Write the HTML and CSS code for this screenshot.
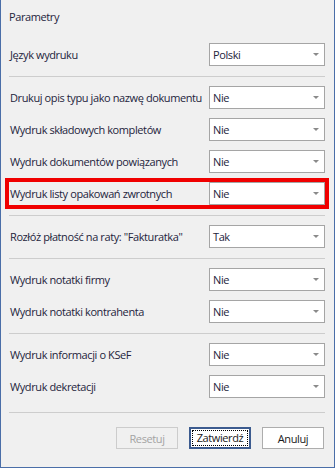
FILE: index.html
```html
<!DOCTYPE html>
<html lang="pl">
<head>
    <meta charset="UTF-8">
    <title>Parametry</title>
    <link rel="stylesheet" href="styles.css">
</head>
<body>
    <div class="window">
        <div class="title">Parametry</div>

        <div class="group">
            <div class="row">
                <span class="label">Język wydruku</span>
                <div class="select">Polski<span class="arrow"></span></div>
            </div>
        </div>

        <div class="group">
            <div class="row">
                <span class="label">Drukuj opis typu jako nazwę dokumentu</span>
                <div class="select">Nie<span class="arrow"></span></div>
            </div>
            <div class="row">
                <span class="label">Wydruk składowych kompletów</span>
                <div class="select">Nie<span class="arrow"></span></div>
            </div>
            <div class="row">
                <span class="label">Wydruk dokumentów powiązanych</span>
                <div class="select">Nie<span class="arrow"></span></div>
            </div>
            <div class="row marked">
                <span class="label">Wydruk listy opakowań zwrotnych</span>
                <div class="select">Nie<span class="arrow"></span></div>
            </div>
        </div>

        <div class="group">
            <div class="row">
                <span class="label">Rozłóż płatność na raty: "Fakturatka"</span>
                <div class="select">Tak<span class="arrow"></span></div>
            </div>
        </div>

        <div class="group">
            <div class="row">
                <span class="label">Wydruk notatki firmy</span>
                <div class="select">Nie<span class="arrow"></span></div>
            </div>
            <div class="row">
                <span class="label">Wydruk notatki kontrahenta</span>
                <div class="select">Nie<span class="arrow"></span></div>
            </div>
        </div>

        <div class="group last">
            <div class="row">
                <span class="label">Wydruk informacji o KSeF</span>
                <div class="select">Nie<span class="arrow"></span></div>
            </div>
            <div class="row">
                <span class="label">Wydruk dekretacji</span>
                <div class="select">Nie<span class="arrow"></span></div>
            </div>
        </div>

        <div class="buttons">
            <button class="btn disabled">Resetuj</button>
            <button class="btn default"><span class="focus">Zatwierdź</span></button>
            <button class="btn">Anuluj</button>
        </div>
    </div>
</body>
</html>
```

FILE: styles.css
```css
body {
    margin: 0;
    padding: 0;
    background-color: #f0f0f0;
    font-family: 'Open Sans', sans-serif;
    font-size: 11px;
    letter-spacing: -0.4px;
    color: #24243c;
}
.window {
    width: 335px;
    height: 468px;
    box-sizing: border-box;
    border: 1px solid #4a6ea8;
    border-top: none;
    background-color: #f0f0f0;
    padding: 0 9px 0 8px;
}
.title {
    height: 43px;
    box-sizing: border-box;
    padding: 9px 0 0 0;
    line-height: 15px;
}
.group {
    display: flex;
    flex-direction: column;
    gap: 9px;
    padding-bottom: 10px;
    margin-bottom: 9px;
    border-bottom: 1px solid #cdcdcd;
}
.group.last {
    padding-bottom: 14px;
    margin-bottom: 14px;
}
.row {
    display: flex;
    align-items: center;
    height: 23px;
}
.row.marked {
    outline: 4px solid #f00000;
}
.label {
    flex: 1;
    padding-left: 1px;
    white-space: nowrap;
}
.select {
    width: 116px;
    height: 23px;
    box-sizing: border-box;
    border: 1px solid #a5a5a5;
    background-color: #fff;
    padding: 0 0 0 3px;
    line-height: 21px;
    display: flex;
    align-items: center;
    justify-content: space-between;
}
.arrow {
    width: 0;
    height: 0;
    margin-right: 5px;
    border-left: 3px solid transparent;
    border-right: 3px solid transparent;
    border-top: 3px solid #8a8a8a;
}
.buttons {
    display: flex;
    justify-content: flex-end;
    gap: 11px;
    padding-right: 1px;
}
.btn {
    width: 62px;
    height: 22px;
    box-sizing: border-box;
    border: 1px solid #adadad;
    background-color: #fff;
    font-family: 'Open Sans', sans-serif;
    font-size: 11px;
    letter-spacing: -0.4px;
    color: #1a1a1a;
    padding: 0;
}
.btn.disabled {
    border-color: #cccccc;
    background-color: #f0f0f0;
    color: #a3a3a3;
}
.btn.default {
    border: 2px solid #3c5b8f;
    padding: 1px;
}
.btn .focus {
    display: block;
    height: 100%;
    box-sizing: border-box;
    border: 1px dotted #000;
    line-height: 14px;
}
```
